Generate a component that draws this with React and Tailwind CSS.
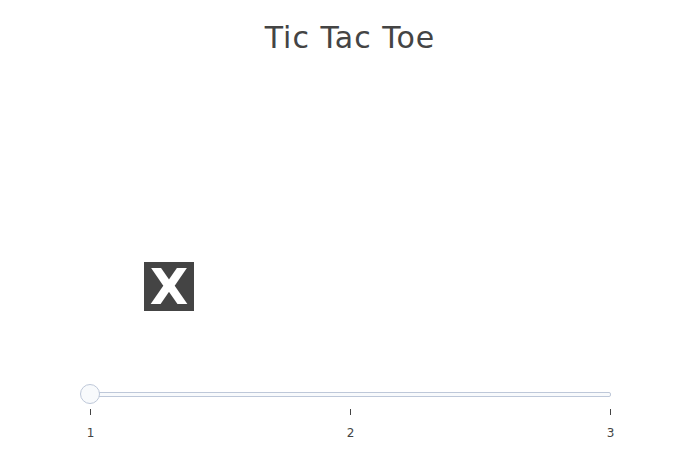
export default function App() {
  return (
    <div className="w-[700px] h-[450px] bg-white flex flex-col text-[#444]" style={{ fontFamily: '"DejaVu Sans", Verdana, sans-serif' }}>
      <div className="pt-[23px] text-[30px] leading-[30px] tracking-[1px] text-center">Tic Tac Toe</div>
      <div className="relative h-[330px]">
        <div className="absolute left-[144px] top-[209px] w-[50px] h-[49px] bg-[#444] flex items-center justify-center">
          <span className="text-white font-bold text-[50px] leading-none" style={{ fontFamily: '"DejaVu Sans", Verdana, sans-serif' }}>X</span>
        </div>
      </div>
      <div className="relative h-[22px] flex items-center">
        <div className="ml-[90px] w-[521px] h-[5px] border border-[#bec8d9] bg-[#f8fafc] rounded-[2px]"></div>
        <div className="absolute left-[80px] top-[1px] w-[20px] h-[20px] rounded-full border border-[#bec8d9] bg-[#f8fafc]"></div>
      </div>
      <div className="ml-[90px] w-[521px] flex justify-between">
        {["1", "2", "3"].map((t) => (
          <div key={t} className="w-px flex flex-col items-center">
            <div className="mt-[4px] h-[6px] w-px bg-[#444]"></div>
            <div className="mt-[12px] text-[12px] leading-[12px] whitespace-nowrap">{t}</div>
          </div>
        ))}
      </div>
    </div>
  );
}
